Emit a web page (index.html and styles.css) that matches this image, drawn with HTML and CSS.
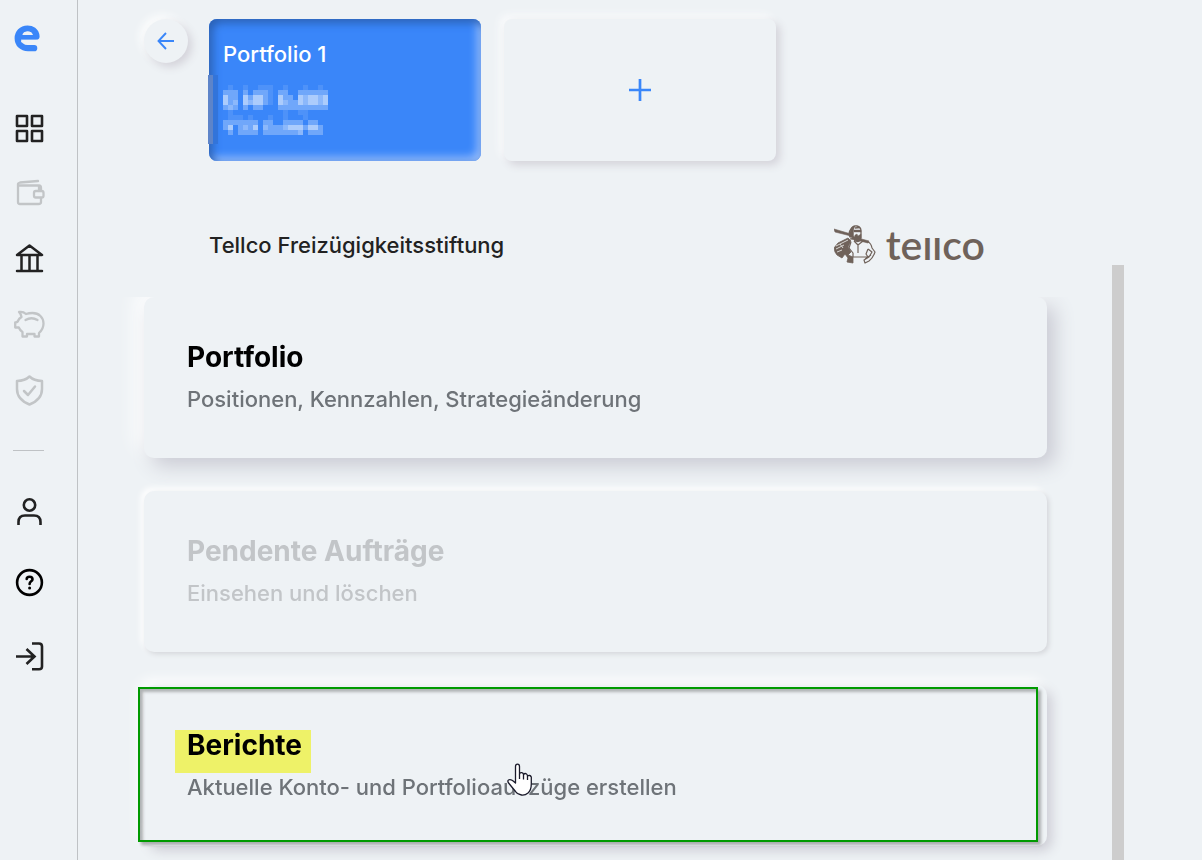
FILE: index.html
```html
<!DOCTYPE html>
<html lang="de">
<head>
<meta charset="utf-8">
<meta name="viewport" content="width=device-width, initial-scale=1">
<title>Portfolio</title>
<link rel="stylesheet" href="styles.css">
</head>
<body>
<div class="app">
  <nav class="sidebar" aria-label="Hauptnavigation">
    <a class="nav-link nav-brand" href="#" aria-label="Startseite">
      <svg width="32" height="32" viewBox="1 1 32 32" fill="none" stroke="#3a86f9" stroke-width="6.2" stroke-linecap="round" stroke-linejoin="round"><path d="M7 14.500H24.500C24 8.600 19.500 6.500 15.500 6.500C9.500 6.500 5.700 11 5.700 16.200C5.700 22 10 26.200 16 26.200H22.200"/><path d="M7 14.800H24" stroke-width="5"/><path d="M10 19.600H28" stroke="#eef2f5" stroke-width="1.800"/><path d="M10.800 19C11.500 21.400 13.500 22.600 16 22.600H23L25 19Z" fill="#eef2f5" stroke="none"/><path d="M10.300 13C11 10.800 13 9.500 15.600 9.500S20.300 10.800 21 13Z" fill="#eef2f5" stroke="none"/></svg>
    </a>
    <a class="nav-link" href="#" aria-label="Übersicht">
      <svg width="32" height="32" viewBox="0 0 32 32" fill="none" stroke="#222" stroke-width="2.600" stroke-linejoin="round"><path d="M4 4h10v10H4zM19 4h10v10H19zM4 19h10v10H4zM19 19h10v10H19z"/></svg>
    </a>
    <a class="nav-link nav-off" href="#" aria-label="Wallet">
      <svg width="32" height="32" viewBox="-1 0 32 32" fill="none" stroke="#c2c5c7" stroke-width="2.300" stroke-linecap="round" stroke-linejoin="round"><path d="M25 14V9.500Q25 8.500 24 8.500H5.500Q4 8.500 4 7M4 7Q4 6 6 5.500L24 4M4 7V25Q4 27 6 27H24.500Q27 27 27 25V21M27 14V11Q27 8.500 25 8.500"/><rect x="20" y="14" width="9.500" height="6.500" rx="1.800"/></svg>
    </a>
    <a class="nav-link" href="#" aria-label="Bank">
      <svg width="32" height="32" viewBox="0 0 32 32" fill="none" stroke="#222" stroke-width="2.500" stroke-linecap="round" stroke-linejoin="round"><path d="M4 13L16.500 3.500L29 13ZM4 29H29M8.500 13V28M16.500 13V28M24.500 13V28"/></svg>
    </a>
    <a class="nav-link nav-pig" href="#" aria-label="Sparen">
      <svg width="32" height="32" viewBox="0 0 32 32" fill="none" stroke="#c2c5c7" stroke-width="2.300" stroke-linecap="round" stroke-linejoin="round"><path d="M6 4Q10 3.200 13 6Q16 5 19.500 5C26 5 30.500 9.500 30.500 15.500Q30.500 21 26 25V28.500H21.500V26H14V28.500H9.500V24Q7 22.500 5.800 19.500H2.200V14.500Q4.500 14.500 5.200 12.500Q6 10.500 8.500 9Q8 6 6 4ZM12.500 12Q18.500 8.500 24.500 12"/></svg>
    </a>
    <a class="nav-link nav-shield" href="#" aria-label="Versicherung">
      <svg width="32" height="32" viewBox="0 0 32 32" fill="none" stroke="#c2c5c7" stroke-width="2.500" stroke-linecap="round" stroke-linejoin="round"><path d="M16.500 2.500Q12 6.800 4 7V15C4 22.500 9 27.500 16.500 30.500C24 27.500 29 22.500 29 15V7Q21 6.800 16.500 2.500ZM11 17L15 21L22 12.500"/></svg>
    </a>
    <hr class="nav-rule">
    <a class="nav-link nav-user" href="#" aria-label="Profil">
      <svg width="32" height="32" viewBox="0 0 32 32" fill="none" stroke="#222" stroke-width="2.600"><circle cx="16.500" cy="9" r="5.700"/><path d="M5.500 29V26Q5.500 19.500 12 19.500H21Q27.500 19.500 27.500 26V29"/></svg>
    </a>
    <a class="nav-link nav-help" href="#" aria-label="Hilfe">
      <svg width="32" height="32" viewBox="0 0 32 32" fill="none" stroke="#000" stroke-width="2.600" stroke-linecap="round"><circle cx="16.500" cy="16.500" r="12.400"/><path d="M13.700 13Q13.700 10.700 16.600 10.700Q19.500 10.700 19.500 13.200C19.500 15.500 16.600 15 16.600 18"/><circle cx="16.600" cy="22" r="1.500" fill="#000" stroke="none"/></svg>
    </a>
    <a class="nav-link nav-exit" href="#" aria-label="Abmelden">
      <svg width="32" height="32" viewBox="0 0 32 32" fill="none" stroke="#222" stroke-width="2.600"><path d="M19 3.500H26Q29 3.500 29 6.500V26.500Q29 29.300 26 29.300H19M3 16.500H21.500M13.500 9L21.500 16.500L13.500 24"/></svg>
    </a>
  </nav>

  <main class="main">
    <header class="accounts">
      <button class="back" type="button" aria-label="Zurück">
        <svg width="18" height="18" viewBox="0 0 18 18" fill="none" stroke="#3a86f9" stroke-width="1.900"><path d="M17 9H1.800M9 1L1.500 9L9 17"/></svg>
      </button>
      <a class="account" href="#">
        <span class="account-name">Portfolio 1</span>
        <svg class="mosaic" width="105" height="50" viewBox="0 0 21 10" fill="#fff" shape-rendering="crispEdges" role="img" aria-label="Kontowerte verborgen">
          <path opacity=".1" d="M1 0h1v1h-1zM4 0h1v1h-1zM7 0h3v1h-3zM12 0h1v1h-1zM16 0h1v1h-1zM19 0h1v1h-1zM9 1h1v3h-1zM1 5h1v1h-1zM12 5h1v1h-1zM15 5h2v1h-2zM1 6h3v1h-3zM5 6h1v1h-1zM9 6h1v1h-1zM12 6h1v1h-1zM16 6h1v1h-1z"/>
          <path opacity=".28" d="M0 1h3v4h-3zM4 1h1v4h-1zM5 2h1v2h-1zM6 1h3v3h-3zM6 4h2v1h-2zM11 1h2v4h-2zM13 2h1v3h-1zM14 3h1v2h-1zM15 1h6v4h-6zM0 7h2v1h-2zM2 7h5v1h-5zM8 7h2v1h-2zM12 7h4v1h-4zM17 7h2v1h-2zM0 8h2v1h-2zM3 8h4v1h-4zM8 8h12v1h-12zM1 9h1v1h-1zM3 9h4v1h-4zM8 9h8v1h-8zM17 9h3v1h-3z"/>
          <path opacity=".2" d="M2 3h1v1h-1zM5 3h1v1h-1zM12 3h1v1h-1zM16 2h1v2h-1zM19 2h1v2h-1zM1 4h1v1h-1zM4 8h1v1h-1zM8 8h1v1h-1zM12 8h1v1h-1zM15 9h1v1h-1z"/>
          <path opacity=".42" d="M0 2h1v2h-1zM4 2h1v2h-1zM6 2h2v2h-2zM11 2h1v2h-1zM15 2h1v2h-1zM17 2h2v2h-2zM20 2h1v2h-1zM1 8h1v1h-1zM6 8h1v1h-1zM13 8h3v1h-3zM17 8h2v1h-2z"/>
        </svg>
      </a>
      <button class="account-add" type="button" aria-label="Portfolio hinzufügen">
        <svg width="22" height="22" viewBox="0 0 22 22" stroke="#3a86f9" stroke-width="2.700"><path d="M11 0V22M0 11H22"/></svg>
      </button>
    </header>

    <section class="scroller">
      <div class="content">
        <div class="foundation">
          <h1 class="foundation-name">Tellco Freizügigkeitsstiftung</h1>
          <div class="logo">
            <svg width="42" height="42" viewBox="0 0 42 42" fill="none" stroke="#6f625a" stroke-width="1.300" stroke-linejoin="round" aria-hidden="true">
              <path d="M16 13Q14 9 17 5Q19 1 23 2Q27 3 27 7V14L25 17H21L19 12V6Z" fill="#eef2f5"/>
              <path d="M16 13V8Q17 2 21 2L19 7V14ZM21 11L23 10L24 12L27 10V15Q26 18 23 18L20 14ZM20 6H27V8H20Z" fill="#6f625a" stroke-width=".4"/><path d="M21 4L26 3.500M17.500 6V12"/>
              <path d="M0 5L17 10V12L1 8ZM16 15L20 13L35 17L34 19L22 16Z" fill="#6f625a" stroke-width=".6"/>
              <path d="M0 24L4 19L14 14L17 17L14 23L17 28L14 31L19 33V39L13 38L14 34L11 30L8 34L3 31L1 28Z" fill="#6f625a" stroke-width=".8"/><path d="M2 22L14 16M2 25L10 21M3 28L8 26M6 20L9 24" stroke="#d8d6d3" stroke-width="1"/>
              <path d="M17 18L15 24L19 29V33H34L32 30L34 25M20 17L24 21L29 17L34 18Q37 19 38 24L41 28Q39 34 35 37L31 39L30 36L35 33L38 28L34 25M24 21V29M31 35L37 31" stroke-width="1.200"/>
            </svg>
            <span class="wordmark" aria-label="tellco">te<span class="short">ll</span>co</span>
          </div>
        </div>
        <div class="cards">
          <button class="card card-raised" type="button">
            <span class="card-title">Portfolio</span>
            <span class="card-text">Positionen, Kennzahlen, Strategieänderung</span>
          </button>
          <button class="card card-disabled" type="button" disabled>
            <span class="card-title">Pendente Aufträge</span>
            <span class="card-text">Einsehen und löschen</span>
          </button>
          <button class="card card-hover" type="button">
            <span class="card-title"><span class="marked">Berichte</span></span>
            <span class="card-text">Aktuelle Konto- und Portfolioauszüge erstellen</span>
            <span class="outline"></span>
            <svg class="pointer" width="28" height="34" viewBox="0 0 28 34" fill="#fff" stroke="#1b1b2b" stroke-width="1.300" stroke-linejoin="round" aria-hidden="true"><path d="M9.500 20V3.500Q9.500 1.200 11.500 1.200T13.500 3.500V11Q14 9.300 15.800 9.700Q17.300 10 17.500 11.500Q19 9.800 20.500 11Q21.300 11.500 21.500 13Q24 11.500 25.300 14V21Q25.300 27 22 30Q19 32.500 15.500 32Q11.500 31.500 9.500 28.500L3 20.500Q1 18 2.500 17T6.500 17.500Z"/><path d="M13.500 11V16M17.500 11.500V16.500M21.500 13V17"/></svg>
          </button>
        </div>
      </div>
      <div class="scrollbar"></div>
    </section>
  </main>
</div>
</body>
</html>
```
FILE: styles.css
```css
* { box-sizing: border-box; }

body {
  margin: 0;
  background: #eef2f5;
  color: #222;
  font-family: Inter, "Liberation Sans", sans-serif;
}

button {
  border: 0;
  padding: 0;
  background: #eef2f5;
  font: inherit;
  color: inherit;
}

a { color: inherit; text-decoration: none; }
svg { display: block; flex: none; }

.app {
  display: flex;
  height: 100vh;
  min-height: 700px;
  overflow: hidden;
}

.sidebar {
  flex: none;
  width: 78px;
  padding: 23px 0 0 13px;
  border-right: 1px solid #bfc2c5;
  display: flex;
  flex-direction: column;
  align-items: flex-start;
  gap: 33px;
}

.nav-brand { margin-bottom: 24px; }
.nav-pig, .nav-shield { margin-top: 1px; }
.nav-rule {
  width: 31px;
  margin: 11px 0 12px;
  border: 0;
  border-top: 1px solid #bfc2c5;
}
.nav-help { margin-top: 5px; }
.nav-exit { margin-top: 9px; }

.main {
  flex: 1;
  min-width: 0;
  display: flex;
  flex-direction: column;
  padding: 19px 78px 0 66px;
}

.accounts {
  display: flex;
  align-items: flex-start;
}

.back {
  width: 44px;
  height: 44px;
  margin-right: 21px;
  border-radius: 50%;
  display: grid;
  place-items: center;
  box-shadow: 4px 4px 8px #d4d3da, -4px -4px 8px #fcfdfd;
}

.account, .account-add {
  width: 272px;
  height: 142px;
  border-radius: 8px;
}

.account {
  position: relative;
  margin-right: 23px;
  padding: 20px 14px;
  display: flex;
  flex-direction: column;
  gap: 16px;
  background: #3a86f9;
  color: #fff;
  box-shadow: inset 4px 4px 8px #2a61b6, inset -4px -4px 8px #97bdfb;
}

.account::before {
  content: "";
  position: absolute;
  left: -1px;
  top: 56px;
  width: 10px;
  height: 69px;
  background: linear-gradient(90deg, #5d84c9 50%, #3274da 50%);
}

.account-name { font-size: 22px; line-height: 30px; font-weight: 500; }

.account-add {
  display: grid;
  place-items: center;
  box-shadow: 4px 4px 8px #d4d3da, -4px -4px 8px #fafbfc;
}

.scroller {
  flex: 1;
  min-height: 0;
  display: flex;
  gap: 65px;
}

.content { flex: 1; min-width: 0; }

.foundation {
  height: 136px;
  padding: 32px 62px 0 65px;
  display: flex;
  align-items: center;
  justify-content: space-between;
}

.foundation-name {
  margin: 0;
  font-size: 22px;
  line-height: 28px;
  font-weight: 500;
}

.logo { display: flex; align-items: center; gap: 10px; }

.wordmark {
  color: #6f625a;
  font-family: Lato, sans-serif;
  font-size: 41px;
  line-height: 40px;
  font-weight: 600;
}

.short {
  display: inline-block;
  clip-path: inset(13px 0 0 0);
}

.cards {
  display: flex;
  flex-direction: column;
  gap: 33px;
  clip-path: inset(0 -40px -40px -40px);
}

.card {
  position: relative;
  display: flex;
  flex-direction: column;
  align-items: flex-start;
  gap: 12px;
  padding: 44px 43px 45px;
  border-radius: 10px;
  text-align: left;
}

.card-raised { box-shadow: 8px 8px 20px #c9cad3, -8px -8px 20px #fff; }
.card-disabled { box-shadow: 2px 2px 5px #d4d6da, -3px -3px 6px #fff; color: #c2c5c8; }
.card-hover { box-shadow: 5px 5px 12px #ceced6, -5px -5px 14px #fff; }

.card-title { color: #000; font-size: 28px; line-height: 32px; font-weight: 700; }
.card-text { color: #6e7378; font-size: 22px; line-height: 28px; font-weight: 500; }
.card-disabled .card-title, .card-disabled .card-text { color: inherit; }

.marked { position: relative; }
.marked::after {
  content: "";
  position: absolute;
  left: -12px;
  right: -9px;
  top: 2px;
  height: 43px;
  background: #ffff6c;
  mix-blend-mode: multiply;
}

.outline {
  position: absolute;
  left: -6px;
  right: 9px;
  top: 2px;
  bottom: 4px;
  border: 2px solid #009a00;
  box-shadow: 3px 3px 3px #a9acae, inset 3px 3px 3px #b0b3b5;
}

.pointer {
  position: absolute;
  left: 362px;
  top: 78px;
}

.scrollbar {
  flex: none;
  width: 12px;
  margin-top: 104px;
  background: #cdcdcd;
}
```
